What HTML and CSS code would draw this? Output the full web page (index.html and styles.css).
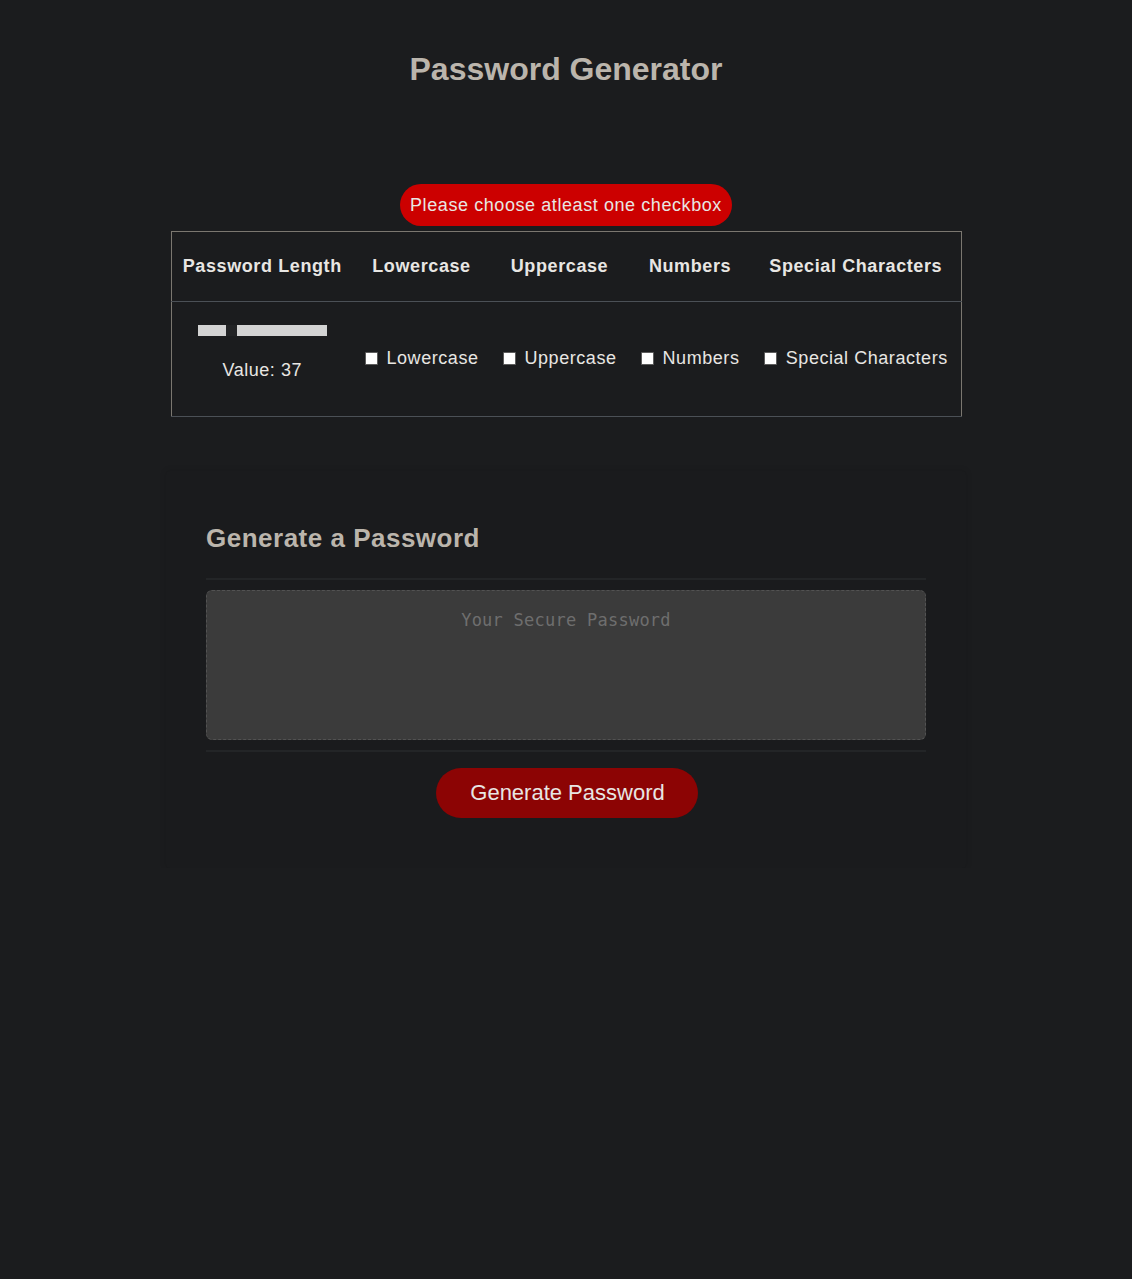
FILE: index.html
```html
<!DOCTYPE html>
<html>
<head>
<meta charset="utf-8">
<title>Password Generator</title>
<link rel="stylesheet" href="styles.css">
</head>
<body>
<header class="top">
  <h1 class="title">Password Generator</h1>
</header>
<main class="main">
  <div class="alert-wrap"><div class="alert">Please choose atleast one checkbox</div></div>
  <table class="options">
    <colgroup>
      <col class="c1"><col class="c2"><col class="c3"><col class="c4"><col class="c5">
    </colgroup>
    <thead>
      <tr>
        <th>Password Length</th>
        <th>Lowercase</th>
        <th>Uppercase</th>
        <th>Numbers</th>
        <th>Special Characters</th>
      </tr>
    </thead>
    <tbody>
      <tr>
        <td>
          <div class="slider"><span class="track-a"></span><span class="thumb"></span><span class="track-b"></span></div>
          <div class="value">Value: 37</div>
        </td>
        <td><label class="opt"><input type="checkbox" class="box"><span>Lowercase</span></label></td>
        <td><label class="opt"><input type="checkbox" class="box"><span>Uppercase</span></label></td>
        <td><label class="opt"><input type="checkbox" class="box"><span>Numbers</span></label></td>
        <td><label class="opt"><input type="checkbox" class="box"><span>Special Characters</span></label></td>
      </tr>
    </tbody>
  </table>

  <section class="card">
    <h2 class="card-title">Generate a Password</h2>
    <div class="card-body">
      <textarea class="pw" placeholder="Your Secure Password" readonly></textarea>
    </div>
    <div class="card-footer">
      <button class="btn">Generate Password</button>
    </div>
  </section>
</main>
</body>
</html>
```
FILE: styles.css
```css
html, body {
  background: #1b1c1e;
}
body {
  margin: 8px;
  font-family: "Liberation Sans", Arial, sans-serif;
  color: #e8e6e3;
}
.top {
  padding-top: 41px;
  text-align: center;
}
.title {
  margin: 0;
  font-size: 32px;
  line-height: 40px;
  font-weight: bold;
  color: #bbb5ac;
}
.main {
  display: flex;
  flex-direction: column;
  align-items: center;
  padding-top: 95px;
}
.alert-wrap {
  display: flex;
  justify-content: center;
  margin-bottom: 5px;
}
.alert {
  background: #cc0000;
  color: #e8e6e3;
  font-size: 18px;
  letter-spacing: 0.58px;
  line-height: 42px;
  height: 42px;
  padding: 0 10px;
  border-radius: 21px;
}
.options {
  width: 790px;
  table-layout: fixed;
  border-collapse: collapse;
  border: 1px solid #7b7770;
}
.c1 { width: 182px; }
.c2 { width: 137px; }
.c3 { width: 139px; }
.c4 { width: 122px; }
.c5 { width: 210px; }
.options th {
  height: 69px;
  padding: 0;
  font-size: 18px;
  letter-spacing: 0.6px;
  font-weight: bold;
  text-align: center;
  vertical-align: middle;
  border-bottom: 1px solid #4b5056;
}
.options td {
  height: 114px;
  padding: 0;
  text-align: center;
  vertical-align: middle;
  font-size: 18px;
  letter-spacing: 0.55px;
  border-bottom: 1px solid #4b5056;
}
.slider {
  display: flex;
  width: 129px;
  height: 11px;
  margin: 0 auto 0 26px;
  position: relative;
  top: -12px;
}
.track-a { width: 28px; background: #d3d3d3; }
.thumb { width: 11px; background: #222325; }
.track-b { flex: 1; background: #d3d3d3; }
.value {
  margin-top: 12px;
  line-height: 22px;
  position: relative;
  top: -1px;
}
.opt {
  display: inline-flex;
  align-items: center;
  gap: 9px;
  white-space: nowrap;
}
.box {
  appearance: none;
  -webkit-appearance: none;
  margin: 0;
  width: 13px;
  height: 13px;
  background: #ffffff;
  border: 1px solid #5c5c5c;
  border-radius: 1px;
}
.card {
  margin-top: 54px;
  width: 720px;
  padding: 40px 40px 50px;
  background: #1a1b1d;
  box-shadow: 0 0 6px rgba(0, 0, 0, 0.15);
  border-radius: 4px;
}
.card-title {
  margin: 12px 0 0;
  font-size: 26px;
  letter-spacing: 0.5px;
  line-height: 30px;
  font-weight: bold;
  color: #bbb5ac;
  padding-bottom: 25px;
  border-bottom: 2px solid #232527;
}
.card-body {
  padding: 10px 0;
  border-bottom: 2px solid #232527;
  display: flex;
}
.pw {
  width: 100%;
  height: 150px;
  box-sizing: border-box;
  resize: none;
  background: #3b3b3b;
  border: 1px dashed #525252;
  border-radius: 6px;
  font-family: "DejaVu Sans Mono", monospace;
  font-size: 17px;
  line-height: 20px;
  padding: 19px 10px;
  text-align: center;
  color: #e8e6e3;
  outline: none;
}
.pw::placeholder {
  color: #6e6e6e;
  letter-spacing: 0.25px;
}
.card-footer {
  display: flex;
  justify-content: center;
  padding-top: 16px;
}
.btn {
  height: 50px;
  padding: 0 33px 0 34px;
  margin-left: 2px;
  border: none;
  border-radius: 25px;
  background: #8c0404;
  color: #e8e6e3;
  font-family: "Liberation Sans", Arial, sans-serif;
  font-size: 22px;
  cursor: pointer;
}
```
